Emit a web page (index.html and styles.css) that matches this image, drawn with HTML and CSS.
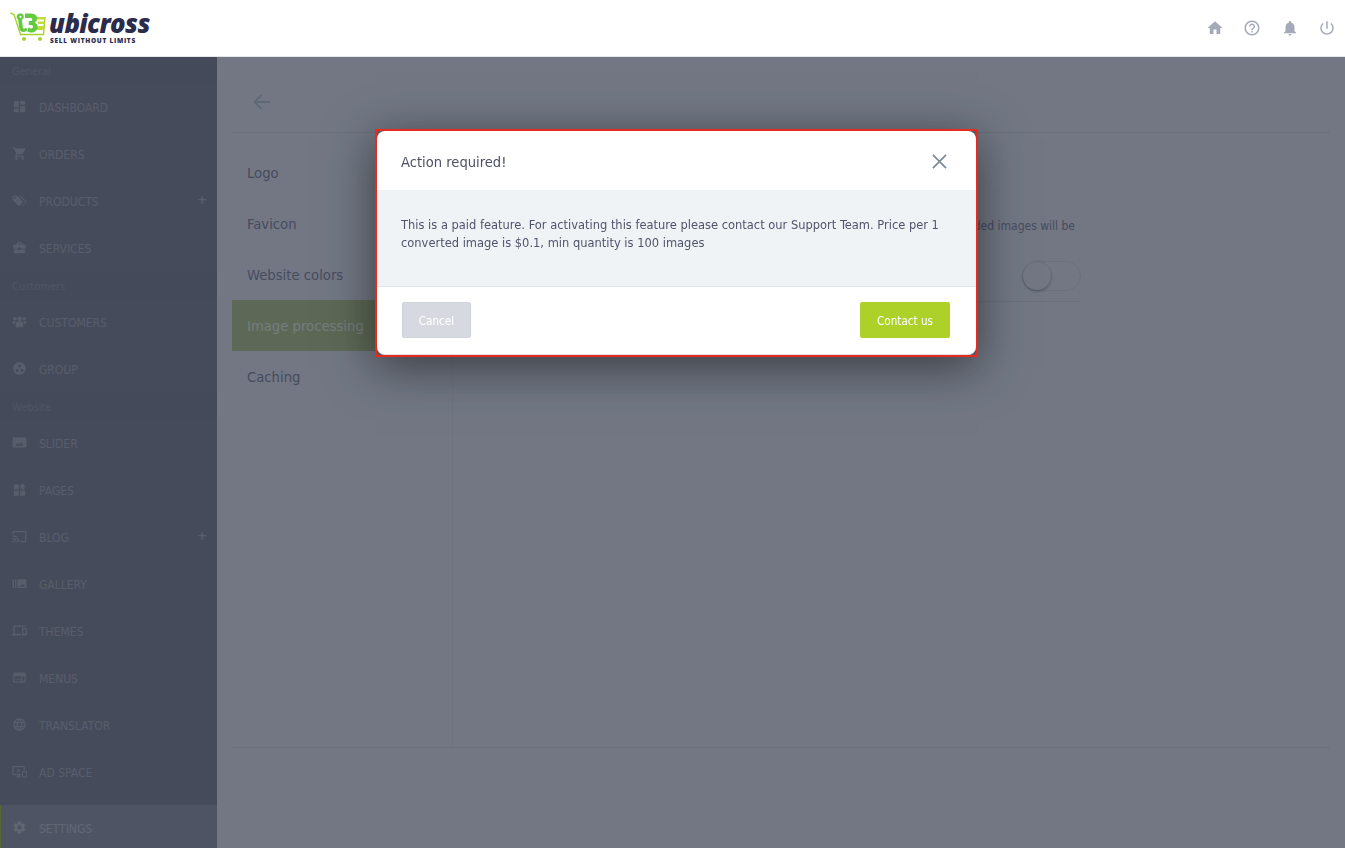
FILE: index.html
```html
<!DOCTYPE html>
<html lang="en">
<head>
<meta charset="utf-8">
<title>Ubicross settings</title>
<link rel="stylesheet" href="styles.css">
</head>
<body>
<header class="topbar">
  <a class="logo">
    <svg class="logo-cart" viewBox="0 0 38 31" width="38" height="31">
      <path class="cart-line" d="M.5 .8 4 2.500 10.500 22.500H33.500L35 5"/>
      <circle class="cart-wheel" cx="14" cy="27" r="2"/>
      <circle class="cart-wheel" cx="30" cy="27" r="2"/>
      <path class="cart-lime" d="M26 5h9.500l-.5 2.500h-9zM28 9.500h7l-.4 2.500H28zM27 14h7.300l-.4 4H26z"/>
      <path class="cart-fill" fill-rule="evenodd" d="M10.500 1.500a3.300 3.300 0 0 1 3.300 3.300c0 1.300-.8 2.500-2 3l1.200 8c.2 1 1 1.300 1.700.8l1.300-1 1.300 2.700c-1 1-2.300 1.700-3.700 1.700-2.500 0-4-1.500-4.300-3.700l-1.200-8.800a3.300 3.300 0 0 1 2.400-6zM15 1.500h6c6.500 0 8 6 4 9 4.500 2.500 3 10-3.500 10-1.500 0-3-.2-4-.8l.6-4.200c1 .6 2.200.9 3.200.9 2.300 0 2.300-3.400 0-3.400h-2.500V9h2c2 0 2-3 0-3H15z"/>
      <circle class="cart-white" cx="10.500" cy="4.800" r="1.100"/>
    </svg>
    <span class="logo-text">
      <span class="logo-name">ubicross</span>
      <span class="logo-tag">SELL WITHOUT LIMITS</span>
    </span>
  </a>
  <nav class="top-icons">
    <svg viewBox="0 0 24 24"><path d="M10 20v-6h4v6h5v-8h3L12 3 2 12h3v8z"/></svg>
    <svg viewBox="0 0 24 24"><path d="M11 18h2v-2h-2v2zm1-16C6.480 2 2 6.480 2 12s4.480 10 10 10 10-4.480 10-10S17.520 2 12 2zm0 18c-4.410 0-8-3.590-8-8s3.590-8 8-8 8 3.590 8 8-3.590 8-8 8zm0-14c-2.210 0-4 1.790-4 4h2c0-1.100.9-2 2-2s2 .9 2 2c0 2-3 1.750-3 5h2c0-2.250 3-2.500 3-5 0-2.210-1.790-4-4-4z"/></svg>
    <svg viewBox="0 0 24 24"><path d="M12 22c1.100 0 2-.9 2-2h-4c0 1.100.89 2 2 2zm6-6v-5c0-3.070-1.640-5.640-4.500-6.320V4c0-.83-.67-1.500-1.500-1.500s-1.500.67-1.500 1.500v.68C7.630 5.360 6 7.920 6 11v5l-2 2v1h16v-1l-2-2z"/></svg>
    <svg viewBox="0 0 24 24"><path d="M13 3h-2v10h2V3zm4.830 2.170l-1.420 1.420C17.990 7.860 19 9.810 19 12c0 3.870-3.130 7-7 7s-7-3.130-7-7c0-2.190 1.010-4.140 2.580-5.420L6.170 5.170C4.230 6.820 3 9.260 3 12c0 4.970 4.030 9 9 9s9-4.030 9-9c0-2.740-1.230-5.180-3.170-6.830z"/></svg>
  </nav>
</header>

<div class="shell">
  <aside class="sidebar">
    <div class="side-label">General</div>
    <a class="side-item"><svg viewBox="0 0 24 24"><path d="M3 13h8V3H3v10zm0 8h8v-6H3v6zm10 0h8V11h-8v10zm0-18v6h8V3h-8z"/></svg><span>DASHBOARD</span></a>
    <a class="side-item"><svg viewBox="0 0 24 24"><path d="M7 18c-1.100 0-1.990.9-1.990 2S5.900 22 7 22s2-.9 2-2-.9-2-2-2zM1 2v2h2l3.600 7.590-1.350 2.450c-.16.28-.25.61-.25.96 0 1.100.9 2 2 2h12v-2H7.420c-.14 0-.25-.11-.25-.25l.03-.12.9-1.630h7.450c.75 0 1.410-.41 1.750-1.030l3.580-6.490c.08-.14.12-.31.12-.48 0-.55-.45-1-1-1H5.210l-.94-2H1zm16 16c-1.100 0-1.990.9-1.990 2s.89 2 1.990 2 2-.9 2-2-.9-2-2-2z"/></svg><span>ORDERS</span></a>
    <a class="side-item"><svg viewBox="0 0 24 24"><path d="M1 4.500V11l10 10 7-7L8 4.500zM4.500 9a1.700 1.700 0 1 1 0-3.400 1.700 1.700 0 0 1 0 3.400zM11 4.500l11 10-6.500 6.500 1.500 0 7-7L13.500 4.500z"/></svg><span>PRODUCTS</span><b class="plus">+</b></a>
    <a class="side-item"><svg viewBox="0 0 24 24"><path d="M10 16v-1H3.010L3 19c0 1.110.89 2 2 2h14c1.110 0 2-.89 2-2v-4h-7v1h-4zm10-9h-4.010V5l-2-2h-4l-2 2v2H4c-1.100 0-2 .9-2 2v3c0 1.110.89 2 2 2h6v-2h4v2h6c1.100 0 2-.9 2-2V9c0-1.100-.9-2-2-2zm-6 0h-4V5h4v2z"/></svg><span>SERVICES</span></a>
    <div class="side-label">Customers</div>
    <a class="side-item"><svg viewBox="0 0 24 24"><circle cx="12" cy="7.500" r="3.500"/><circle cx="4.500" cy="7.500" r="2.800"/><circle cx="19.500" cy="7.500" r="2.800"/><path d="M6 15c0-2 2-3.500 6-3.500s6 1.500 6 3.500v6H6zM1 11.500h5a6 6 0 0 0-1.500 4.500H1zM23 11.500h-5a6 6 0 0 1 1.500 4.500H23z"/></svg><span>CUSTOMERS</span></a>
    <a class="side-item"><svg viewBox="0 0 24 24"><path d="M12 2C6.480 2 2 6.480 2 12s4.480 10 10 10 10-4.480 10-10S17.520 2 12 2zM8 17.500c-1.380 0-2.500-1.120-2.500-2.500s1.120-2.500 2.500-2.500 2.500 1.120 2.500 2.500-1.120 2.500-2.500 2.500zM9.500 8c0-1.380 1.120-2.500 2.500-2.500s2.500 1.120 2.500 2.500-1.120 2.500-2.500 2.500S9.500 9.380 9.500 8zm6.500 9.500c-1.380 0-2.500-1.120-2.500-2.500s1.120-2.500 2.500-2.500 2.500 1.120 2.500 2.500-1.120 2.500-2.500 2.500z"/></svg><span>GROUP</span></a>
    <div class="side-label">Website</div>
    <a class="side-item"><svg viewBox="0 0 24 24"><path d="M23 18V6c0-1.100-.9-2-2-2H3c-1.100 0-2 .9-2 2v12c0 1.100.9 2 2 2h18c1.100 0 2-.9 2-2zM8.500 12.500l2.500 3.010L14.500 11l4.500 6H5l3.500-4.500z"/></svg><span>SLIDER</span></a>
    <a class="side-item"><svg viewBox="0 0 24 24"><path d="M3 4h8v8H3zM3 14h8v8H3zM13 14h8v8h-8zM17 2l5 5h-2v5h-6V7h-2z"/></svg><span>PAGES</span></a>
    <a class="side-item"><svg viewBox="0 0 24 24"><path d="M21 3H3c-1.100 0-2 .9-2 2v3h2V5h18v14h-7v2h7c1.100 0 2-.9 2-2V5c0-1.100-.9-2-2-2zM1 18v3h3c0-1.660-1.340-3-3-3zm0-4v2c2.760 0 5 2.240 5 5h2c0-3.870-3.130-7-7-7zm0-4v2c4.970 0 9 4.030 9 9h2c0-6.080-4.930-11-11-11z"/></svg><span>BLOG</span><b class="plus">+</b></a>
    <a class="side-item"><svg viewBox="0 0 24 24"><path d="M1 5h2v14H1zm4 0h2v14H5zm17 0H10c-.55 0-1 .45-1 1v12c0 .55.45 1 1 1h12c.55 0 1-.45 1-1V6c0-.55-.45-1-1-1zM11 17l2.500-3.150L15.290 16l2.500-3.220L21 17H11z"/></svg><span>GALLERY</span></a>
    <a class="side-item"><svg viewBox="0 0 24 24"><path d="M4 6h18V4H4c-1.100 0-2 .9-2 2v11H0v3h14v-3H4V6zm19 2h-6c-.55 0-1 .45-1 1v10c0 .55.45 1 1 1h6c.55 0 1-.45 1-1V9c0-.55-.45-1-1-1zm-1 9h-4v-7h4v7z"/></svg><span>THEMES</span></a>
    <a class="side-item"><svg viewBox="0 0 24 24"><path fill-rule="evenodd" d="M4 4h16c1.100 0 2 .9 2 2v12c0 1.100-.9 2-2 2H4c-1.100 0-2-.9-2-2V6c0-1.100.9-2 2-2zM4 10v8h11v-3H5v-1h10v-4zM16.500 10v8H20v-8z"/></svg><span>MENUS</span></a>
    <a class="side-item"><svg viewBox="0 0 24 24"><path d="M11.990 2C6.470 2 2 6.480 2 12s4.470 10 9.990 10C17.520 22 22 17.520 22 12S17.520 2 11.990 2zm6.930 6h-2.950c-.32-1.250-.78-2.450-1.380-3.560 1.840.63 3.370 1.910 4.330 3.560zM12 4.040c.83 1.200 1.480 2.530 1.910 3.960h-3.820c.43-1.430 1.080-2.760 1.910-3.960zM4.260 14C4.100 13.360 4 12.690 4 12s.1-1.360.26-2h3.380c-.08.66-.14 1.320-.14 2 0 .68.06 1.340.14 2H4.260zm.82 2h2.950c.32 1.250.78 2.450 1.380 3.560-1.840-.63-3.370-1.900-4.330-3.560zm2.950-8H5.080c.96-1.660 2.490-2.930 4.330-3.560C8.810 5.550 8.350 6.750 8.030 8zM12 19.960c-.83-1.200-1.480-2.530-1.910-3.960h3.820c-.43 1.430-1.080 2.760-1.910 3.960zM14.340 14H9.660c-.09-.66-.16-1.320-.16-2 0-.68.07-1.350.16-2h4.680c.09.65.16 1.320.16 2 0 .68-.07 1.340-.16 2zm.25 5.560c.6-1.110 1.060-2.310 1.380-3.560h2.950c-.96 1.650-2.490 2.930-4.330 3.560zM16.360 14c.08-.66.14-1.320.14-2 0-.68-.06-1.340-.14-2h3.380c.16.64.26 1.310.26 2s-.1 1.360-.26 2h-3.380z"/></svg><span>TRANSLATOR</span></a>
    <a class="side-item"><svg viewBox="0 0 24 24"><path fill-rule="evenodd" d="M2 3h17c1 0 1.500.7 1.500 1.500V10H18.500V5H2.500v11H15v2h-3v2h3v1.500H6V20h3v-2H2c-1 0-1.500-.7-1.500-1.500v-12C.5 3.700 1 3 2 3zM17 11h6c.5 0 1 .5 1 1v8.500c0 .5-.5 1-1 1h-6c-.5 0-1-.5-1-1V12c0-.5.5-1 1-1zM17.500 13v7h5v-7zM10.500 7l1 2.300 2.500.2-1.900 1.600.6 2.400-2.200-1.300-2.200 1.300.6-2.400L7 9.500l2.500-.2z"/></svg><span>AD SPACE</span></a>
    <a class="side-item side-item-active"><svg viewBox="0 0 24 24"><path d="M19.140 12.940c.04-.3.06-.61.06-.94 0-.32-.02-.64-.07-.94l2.030-1.580c.18-.14.23-.41.12-.61l-1.920-3.320c-.12-.22-.37-.29-.59-.22l-2.390.96c-.5-.38-1.030-.7-1.620-.94l-.36-2.540c-.04-.24-.24-.41-.48-.41h-3.840c-.24 0-.43.17-.47.41l-.36 2.540c-.59.24-1.130.57-1.620.94l-2.390-.96c-.22-.08-.47 0-.59.22L2.740 8.870c-.12.21-.08.47.12.61l2.030 1.580c-.05.3-.09.63-.09.94s.02.64.07.94l-2.030 1.580c-.18.14-.23.41-.12.61l1.920 3.320c.12.22.37.29.59.22l2.390-.96c.5.38 1.030.7 1.620.94l.36 2.540c.05.24.24.41.48.41h3.840c.24 0 .44-.17.47-.41l.36-2.540c.59-.24 1.130-.56 1.620-.94l2.390.96c.22.08.47 0 .59-.22l1.920-3.320c.12-.22.07-.47-.12-.61l-2.010-1.580zM12 15.600c-1.980 0-3.600-1.620-3.600-3.600s1.620-3.600 3.600-3.600 3.600 1.620 3.600 3.600-1.620 3.600-3.600 3.600z"/></svg><span>SETTINGS</span></a>
  </aside>

  <main class="content">
    <div class="back-row">
      <svg viewBox="0 0 24 24"><path d="M20 12H5M11.500 5 4.500 12l7 7"/></svg>
    </div>
    <div class="settings">
      <ul class="tabs">
        <li>Logo</li>
        <li>Favicon</li>
        <li>Website colors</li>
        <li class="tab-active">Image processing</li>
        <li>Caching</li>
      </ul>
      <section class="pane">
        <p class="pane-note">All your newly uploaded images will be</p>
        <div class="pane-row"><span class="toggle"><i class="knob"></i></span></div>
      </section>
    </div>
  </main>
</div>

<div class="backdrop">
  <div class="modal-frame">
    <div class="modal">
      <div class="modal-head">
        <h2>Action required!</h2>
        <svg class="close" viewBox="0 0 16 16"><path d="M1 1l14 14M15 1L1 15"/></svg>
      </div>
      <div class="modal-body">This is a paid feature. For activating this feature please contact our Support Team. Price per 1 converted image is $0.1, min quantity is 100 images</div>
      <div class="modal-foot">
        <button class="btn btn-cancel">Cancel</button>
        <button class="btn btn-contact">Contact us</button>
      </div>
    </div>
  </div>
</div>
</body>
</html>
```

FILE: styles.css
```css
* { box-sizing: border-box; }
html, body { margin: 0; height: 848px; overflow: hidden; }
body {
  font-family: "DejaVu Sans Condensed", "DejaVu Sans", sans-serif;
  font-stretch: condensed;
  background: #eff3f6;
  color: #85869a;
}

.topbar {
  position: relative;
  z-index: 20;
  height: 57px;
  background: #fff;
  border-bottom: 1px solid #e4e6ea;
  display: flex;
  align-items: center;
  justify-content: space-between;
  padding: 0 9px 0 10px;
}
.logo { display: flex; align-items: flex-start; height: 31px; margin-top: -1px; gap: 1px; }
.logo-cart { display: block; flex: none; }
.cart-line { fill: none; stroke: #a8d02e; stroke-width: 1.400; }
.cart-wheel { fill: #a8d02e; }
.cart-fill { fill: #62ca3e; }
.cart-lime { fill: #c3da3a; }
.cart-white { fill: #fff; }
.logo-text { display: flex; flex-direction: column; margin-top: -1px; }
.logo-name {
  font-family: "Open Sans", sans-serif;
  font-stretch: normal;
  font-weight: 800;
  font-style: italic;
  font-size: 25.700px;
  line-height: 26px;
  letter-spacing: -0.6px;
  color: #2b2b4b;
}
.logo-tag {
  font-family: "Open Sans", sans-serif;
  font-stretch: normal;
  font-weight: 800;
  font-size: 6.500px;
  line-height: 7px;
  letter-spacing: .72px;
  color: #2b2b4b;
  margin-left: 1px;
}
.top-icons { display: flex; gap: 19.330px; align-items: center; }
.top-icons svg { width: 18px; height: 18px; fill: #a5aaba; display: block; }

.shell { display: flex; height: 791px; }
.sidebar {
  width: 217px;
  flex: none;
  background: #828592;
  display: flex;
  flex-direction: column;
  overflow: hidden;
}
.side-label {
  height: 27px;
  flex: none;
  padding: 7px 12px 0;
  font-size: 11px;
  line-height: 15px;
  color: #9a9bab;
  background: #7f8290;
}
.side-item {
  height: 47px;
  flex: none;
  display: flex;
  align-items: center;
  padding-left: 12px;
  font-size: 12px;
  color: #b0b1ba;
}
.side-item svg { width: 15px; height: 15px; fill: #b0b1ba; flex: none; margin: -2px 12px 0 0; }
.side-item span { flex: 1; }
.plus {
  font: bold 12px/12px "DejaVu Sans", sans-serif;
  margin: -4px 10px 0 0;
}
.side-item-active {
  margin-top: 9px;
  background: #999cab;
  border-left: 1px solid #a8d02e;
  padding-left: 11px;
  color: #c6c8cf;
}
.side-item-active svg { fill: #c6c8cf; }

.content { flex: 1; padding: 0 15px 0; display: flex; flex-direction: column; }
.back-row {
  height: 76px;
  flex: none;
  padding: 33px 0 0 18px;
  border-bottom: 1px solid #dee1e4;
}
.back-row svg { width: 24px; height: 24px; fill: none; stroke: #becfd5; stroke-width: 1.800; display: block; }
.settings {
  height: 615px;
  flex: none;
  display: flex;
  border-bottom: 1px solid #dee1e4;
}
.tabs {
  list-style: none;
  margin: 14px 0 0;
  padding: 0;
  width: 220px;
  flex: none;
  font-size: 14.700px;
}
.tabs li { height: 51px; line-height: 51px; padding-left: 15px; }
.tab-active { background: #bccd84; color: #f5ffe6; }
.pane { width: 629px; margin-left: 0; border-left: 1px solid #e6e9ec; padding-top: 84px; }
.pane-note { margin: 0; padding-right: 6px; text-align: right; font-size: 12px; line-height: 18px; }
.pane-row {
  margin-top: 26px;
  height: 41px;
  border-bottom: 1px solid #dee1e4;
  display: flex;
  justify-content: flex-end;
}
.toggle {
  width: 59px;
  height: 30px;
  border: 1px solid #dee1e4;
  border-radius: 15px;
  display: block;
}
.knob {
  display: block;
  width: 28px;
  height: 28px;
  border-radius: 50%;
  background: #eff3f6;
  box-shadow: 0 1px 3px rgba(0,0,0,.4);
}

.backdrop {
  position: fixed;
  top: 57px;
  left: 0;
  right: 0;
  bottom: 0;
  z-index: 10;
  background: rgba(30,37,55,.6);
  display: flex;
  justify-content: center;
  align-items: flex-start;
  padding: 72px 0 0 8px;
}
.modal-frame {
  width: 603px;
  border: 2px solid #e8291c;
  background: #555b68;
  box-shadow: 0 10px 45px rgba(0,0,0,.5);
}
.modal { background: #fff; border-radius: 8px; overflow: hidden; border-bottom: 1px solid #dfe3e8; }
.modal-head {
  height: 59px;
  display: flex;
  align-items: center;
  justify-content: space-between;
  padding: 1px 29px 0 24px;
}
.modal-head h2 { margin: 0; font-weight: 400; font-size: 14.600px; color: #4c4f66; }
.close { width: 15px; height: 15px; fill: none; stroke: #7c8a97; stroke-width: 1.800; display: block; }
.modal-body {
  height: 97px;
  padding: 26px 24px 0;
  background: #eff3f6;
  border-bottom: 1px solid #e1e6ea;
  font-size: 12.750px;
  line-height: 18px;
  color: #50546b;
}
.modal-foot {
  height: 67px;
  display: flex;
  justify-content: space-between;
  padding: 15px 26px 0 25px;
}
.btn {
  height: 36px;
  border: 0;
  border-radius: 2px;
  font: inherit;
  font-size: 11.600px;
  color: #fff;
  padding: 2px 0 0;
}
.btn-cancel { width: 69px; background: #d6dae0; border: 1px solid #cfd4da; }
.btn-contact { width: 90px; background: #aed12a; }
```
